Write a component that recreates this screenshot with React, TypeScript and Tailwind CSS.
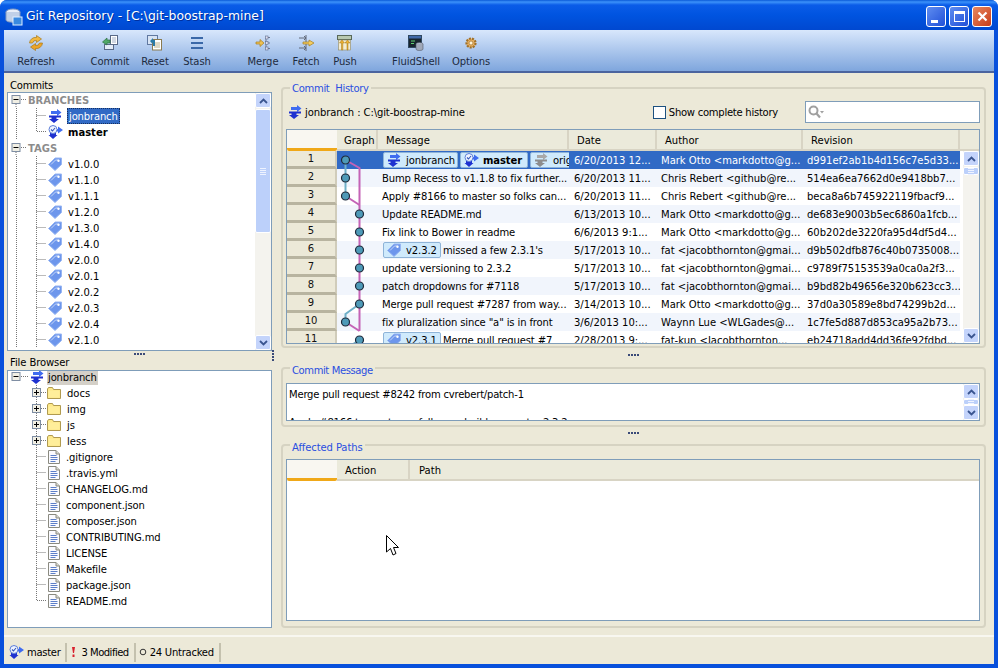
import React from "react";

const Dots = ({ vertical = false }: { vertical?: boolean }) => (
  <div className={vertical ? "flex flex-col gap-[1px]" : "flex gap-[1px]"}>
    {[0, 1, 2, 3].map((i) => (
      <span key={i} className="block h-[2px] w-[2px] bg-[#3a4a78]" />
    ))}
  </div>
);

const BranchIcon = ({ gray = false }: { gray?: boolean }) => {
  const a = gray ? "#a8a8a8" : "#3f6cf0";
  const b = gray ? "#8c8c8c" : "#1f32d0";
  return (
    <svg width="15" height="14" viewBox="0 0 15 14" className="shrink-0">
      <path d="M3 2h6V0l4.500 3.500L9 7V5H3z" fill={a} />
      <path d="M1 6.500h12v2H8.500V10H11l-5 4-5-4h2.500V8.500H1z" fill={b} />
    </svg>
  );
};

const MasterIcon = () => (
  <svg width="15" height="14" viewBox="0 0 15 14" className="shrink-0">
    <path d="M7 4h3V1.500l5 3.500-5 3.500V6.500H7z" fill="#3f6cf0" />
    <path d="M2 8h6v2h1.500L5 14 0.500 10H2z" fill="#1f32d0" />
    <circle cx="5" cy="4.500" r="4" fill="#eef3ff" stroke="#5d7fd8" />
    <path d="M3 4.500l1.500 1.500L7 3" fill="none" stroke="#3355bb" strokeWidth="1.100" />
  </svg>
);

const TagIcon = () => (
  <svg width="14" height="14" viewBox="0 0 14 14" className="shrink-0">
    <path d="M0.500 7.500L7 1h6.500v6.500L7 13.500z" fill="#6d96ec" stroke="#98b6f2" />
    <path d="M3 7.500L7.500 3h3" fill="none" stroke="#c4d6f9" />
    <circle cx="10.500" cy="3.800" r="1.200" fill="#fff" />
  </svg>
);

const FolderIcon = () => (
  <svg width="14" height="12" viewBox="0 0 14 12" className="shrink-0">
    <path d="M0.500 2V11.500H13.500V2.500H6.500L5.500 0.500H1.500z" fill="#fde98a" stroke="#b09a50" />
    <rect x="1.500" y="3.500" width="11" height="7" fill="#ffee9a" />
  </svg>
);

const FileIcon = () => (
  <svg width="12" height="14" viewBox="0 0 12 14" className="shrink-0">
    <path d="M0.500 0.500H8L11.500 4V13.500H0.500z" fill="#fbfbff" stroke="#8a8a80" />
    <path d="M8 0.500V4h3.500" fill="#d8d8d0" stroke="#8a8a80" />
    <path d="M2.500 5.500h6M2.500 7.500h7M2.500 9.500h7M2.500 11.500h5" stroke="#5d7fc8" />
  </svg>
);

const Expander = ({ open }: { open: boolean }) => (
  <g>
    <rect x="0.500" y="0.500" width="8" height="8" fill="#f1efe4" stroke="#7f8ea3" />
    <path d={open ? "M2 4.500h5" : "M2 4.500h5M4.500 2v5"} stroke="#000" />
  </g>
);

const TOOLS = [
  { label: "Refresh", w: "w-[64px]", ml: "ml-0", icon: 0 },
  { label: "Commit", w: "w-[44px]", ml: "ml-[20px]", icon: 1 },
  { label: "Reset", w: "w-[40px]", ml: "ml-[3px]", icon: 2 },
  { label: "Stash", w: "w-[40px]", ml: "ml-[2px]", icon: 3 },
  { label: "Merge", w: "w-[40px]", ml: "ml-[26px]", icon: 4 },
  { label: "Fetch", w: "w-[40px]", ml: "ml-[3px]", icon: 5 },
  { label: "Push", w: "w-[36px]", ml: "ml-[1px]", icon: 6 },
  { label: "FluidShell", w: "w-[50px]", ml: "ml-[28px]", icon: 7 },
  { label: "Options", w: "w-[46px]", ml: "ml-[7px]", icon: 8 },
];

const ToolIcon = ({ i }: { i: number }) => {
  const icons = [
    <g key="r">
      <path d="M1.500 8a6 6 0 0 1 7-5.500V0.500l5 3.500-5 3.500V5.500a3.500 3.500 0 0 0-4 2.500z" fill="#f2b840" stroke="#a87818" strokeWidth="0.700" />
      <path d="M14.500 8a6 6 0 0 1-7 5.500v2l-5-3.500 5-3.500v2a3.500 3.500 0 0 0 4-2.500z" fill="#eda428" stroke="#a87818" strokeWidth="0.700" />
    </g>,
    <g key="c">
      <rect x="8.500" y="0.500" width="7" height="9" fill="#fff" stroke="#5a6a88" />
      <path d="M10 3h4M10 5h4M10 7h4" stroke="#8090b0" strokeWidth="0.700" />
      <rect x="2.500" y="9.500" width="9" height="5" fill="#e4ecf8" stroke="#5a6a88" />
      <path d="M0.500 7L5 3v2h3v3H5v2z" fill="#50a868" stroke="#2c7040" strokeWidth="0.700" />
    </g>,
    <g key="s">
      <rect x="0.500" y="0.500" width="10" height="9" fill="#d8e4f4" stroke="#6078a0" />
      <rect x="5.500" y="4.500" width="9" height="10.500" fill="#fff" stroke="#8a7a50" />
      <path d="M7 8h6M7 10h6M7 12h6" stroke="#b0a070" strokeWidth="0.800" />
      <path d="M3 6l3-3v2h2v6H6V7.500H5.500V9z" fill="#2a7aa8" />
    </g>,
    <g key="h">
      <path d="M2 3h12M2 8h12M2 13h12" stroke="#3a68a8" strokeWidth="2" />
    </g>,
    <g key="m">
      <path d="M1 7h4V4.500L9 8 5 11.500V9H1z" fill="#f0c050" stroke="#a88020" strokeWidth="0.700" />
      <path d="M11 2.500h4M11 8h4M11 13.500h4M11 2.500v11" stroke="#707890" />
      <rect x="10.500" y="1" width="2.500" height="3" fill="#dde" stroke="#607090" strokeWidth="0.600" />
      <rect x="10.500" y="6.500" width="2.500" height="3" fill="#dde" stroke="#607090" strokeWidth="0.600" />
      <rect x="10.500" y="12" width="2.500" height="3" fill="#dde" stroke="#607090" strokeWidth="0.600" />
    </g>,
    <g key="f">
      <path d="M1 3h7M6 1l2 2-2 2M1 13h7M6 11l2 2-2 2" fill="none" stroke="#606878" />
      <path d="M8 0v16" stroke="#606878" />
      <path d="M5 7h6V5l5 3-5 3V9H5z" fill="#f4cc60" stroke="#a88020" strokeWidth="0.700" />
    </g>,
    <g key="p">
      <rect x="0.500" y="0.500" width="14" height="4" fill="#b8c8b0" stroke="#586858" />
      <rect x="1.500" y="5" width="12" height="10" fill="#f4ecd0" stroke="#908860" strokeWidth="0.600" />
      <path d="M4.500 15V8H2.500L5 5l2.500 3H5.800v7zM10 15V8H8l2.500-3L13 8h-2v7z" fill="#f0b030" stroke="#a07818" strokeWidth="0.500" />
    </g>,
    <g key="fs">
      <rect x="0.500" y="0.500" width="13" height="12" fill="#18242c" stroke="#304860" />
      <rect x="1" y="1" width="12" height="2.500" fill="#4068a8" />
      <path d="M3 6h4M3 8.500h3" stroke="#60d070" />
      <ellipse cx="11.500" cy="9" rx="3.500" ry="1.500" fill="#b0b8c8" stroke="#505868" strokeWidth="0.600" />
      <path d="M8 9v5c0 2 7 2 7 0V9" fill="#a0a8b8" stroke="#505868" strokeWidth="0.600" />
    </g>,
    <g key="o">
      <circle cx="8" cy="8" r="4.500" fill="#e8b060" stroke="#a07028" strokeWidth="2.200" strokeDasharray="2 1.100" />
      <circle cx="8" cy="8" r="2" fill="#fff4d8" stroke="#a07028" strokeWidth="0.700" />
    </g>,
  ];
  return (
    <svg width="16" height="16" viewBox="0 0 16 16" className="overflow-visible">
      {icons[i]}
    </svg>
  );
};

const Scroll = ({
  thumbTop,
  thumbH,
}: {
  thumbTop: number;
  thumbH: number;
}) => {
  const Btn = ({ up }: { up: boolean }) => (
    <div className="flex h-[15px] w-full shrink-0 items-center justify-center rounded-[2px] border border-white bg-[#c4d4fb]">
      <svg width="9" height="6" viewBox="0 0 9 6">
        <path d={up ? "M1 5l3.500-3.500L8 5" : "M1 1l3.500 3.500L8 1"} fill="none" stroke="#3a5590" strokeWidth="1.800" />
      </svg>
    </div>
  );
  return (
    <div className="flex h-full w-[16px] shrink-0 flex-col bg-[#f4f3ee]">
      <Btn up />
      <div className="min-h-0 flex-1 overflow-hidden">
        <div style={{ height: thumbTop }} />
        <div
          className="flex items-center justify-center rounded-[2px] border border-white bg-[#bcd0fa]"
          style={{ height: thumbH }}
        >
          <div className="flex flex-col gap-[1px]">
            <span className="block h-[1px] w-[6px] bg-[#eef3ff]" />
            <span className="block h-[1px] w-[6px] bg-[#eef3ff]" />
            <span className="block h-[1px] w-[6px] bg-[#eef3ff]" />
            <span className="block h-[1px] w-[6px] bg-[#eef3ff]" />
          </div>
        </div>
      </div>
      <Btn up={false} />
    </div>
  );
};

const TreeGroup = ({ label }: { label: string }) => (
  <div className="flex h-[16px] items-center">
    <svg width="20" height="16" className="shrink-0">
      <g transform="translate(3.500 3)">
        <Expander open />
      </g>
      <path d="M13 7.500h6" stroke="#777" strokeDasharray="1 1" />
      <path d="M8 12v4" stroke="#777" strokeDasharray="1 1" />
    </svg>
    <span className="font-bold text-[#8c8c8c]">{label}</span>
  </div>
);

const TreeLeaf = ({
  icon,
  text,
  cls = "",
  last = false,
}: {
  icon: React.ReactNode;
  text: string;
  cls?: string;
  last?: boolean;
}) => (
  <div className="flex h-[16px] items-center">
    <svg width="40" height="16" className="shrink-0">
      <path d={last ? "M28.500 0v7.500h10" : "M28.500 0v16M28.500 7.500h10"} fill="none" stroke="#777" strokeDasharray="1 1" />
      <path d="M8.500 0v16" stroke="#777" strokeDasharray="1 1" />
    </svg>
    <div className="flex w-[19px] shrink-0 justify-start">{icon}</div>
    <span className={"whitespace-nowrap " + cls}>{text}</span>
  </div>
);

const VERSIONS = ["v1.0.0", "v1.1.0", "v1.1.1", "v1.2.0", "v1.3.0", "v1.4.0", "v2.0.0", "v2.0.1", "v2.0.2", "v2.0.3", "v2.0.4", "v2.1.0"];
const FOLDERS = ["docs", "img", "js", "less"];
const FILES = [".gitignore", ".travis.yml", "CHANGELOG.md", "component.json", "composer.json", "CONTRIBUTING.md", "LICENSE", "Makefile", "package.json", "README.md"];

const MARK = "Mark Otto <markdotto@g...";
const CHRIS = "Chris Rebert <github@re...";
const FAT = "fat <jacobthornton@gmai...";

type Row = { msg?: string; tag?: string; date: string; author: string; rev: string; badges?: boolean };
const ROWS: Row[] = [
  { badges: true, date: "6/20/2013 12...", author: MARK, rev: "d991ef2ab1b4d156c7e5d33..." },
  { msg: "Bump Recess to v1.1.8 to fix further...", date: "6/20/2013 11...", author: CHRIS, rev: "514ea6ea7662d0e9418bb7..." },
  { msg: "Apply #8166 to master so folks can...", date: "6/20/2013 11...", author: CHRIS, rev: "beca8a6b745922119fbacf9..." },
  { msg: "Update README.md", date: "6/13/2013 10...", author: MARK, rev: "de683e9003b5ec6860a1fcb..." },
  { msg: "Fix link to Bower in readme", date: "6/6/2013 9:1...", author: MARK, rev: "60b202de3220fa95d4df5d4..." },
  { tag: "v2.3.2", msg: "missed a few 2.3.1's", date: "5/17/2013 10...", author: FAT, rev: "d9b502dfb876c40b0735008..." },
  { msg: "update versioning to 2.3.2", date: "5/17/2013 10...", author: FAT, rev: "c9789f75153539a0ca0a2f3..." },
  { msg: "patch dropdowns for #7118", date: "5/17/2013 10...", author: FAT, rev: "b9bd82b49656e320b623cc3..." },
  { msg: "Merge pull request #7287 from way...", date: "3/14/2013 10...", author: MARK, rev: "37d0a30589e8bd74299b2d..." },
  { msg: 'fix pluralization since "a" is in front', date: "3/6/2013 10:...", author: "Waynn Lue <WLGades@...", rev: "1c7fe5d887d853ca95a2b73..." },
  { tag: "v2.3.1", msg: "Merge pull request #7", date: "2/28/2013 9:...", author: "fat-kun <Jacobthornton...", rev: "eb24718add4dd36fe92fdbd..." },
];

const Badge = ({ children, w }: { children: React.ReactNode; w: string }) => (
  <div className={"flex h-[16px] shrink-0 items-center gap-[4px] overflow-hidden rounded-[2px] border border-[#8fb4d8] bg-[#cfeafc] pl-[3px] tracking-[-0.1px] text-black " + w}>
    {children}
  </div>
);

const Graph = () => (
  <svg width="41" height="198" viewBox="0 0 41 198" fill="none" className="absolute left-[50px] top-0">
    <path d="M8.500 9V45" stroke="#6fb0c8" strokeWidth="2" />
    <path d="M8.500 9L22.500 17V180" stroke="#c463b6" strokeWidth="2" />
    <path d="M8.500 45L22.500 54" stroke="#c463b6" strokeWidth="2" />
    <path d="M22.500 153L8.500 163V171" stroke="#6fb0c8" strokeWidth="2" />
    <path d="M8.500 171L22.500 180" stroke="#c463b6" strokeWidth="2" />
    <path d="M22.500 189L8.500 198" stroke="#6fb0c8" strokeWidth="2" />
    {[[8.5, 9], [8.5, 27], [8.5, 45], [22.5, 63], [22.5, 81], [22.5, 99], [22.5, 117], [22.5, 135], [22.5, 153], [8.5, 171], [22.5, 189]].map(([x, y], i) => (
      <circle key={i} cx={x} cy={y} r="4" fill="#4e9ab8" stroke="#1f2a3a" strokeWidth="1.200" />
    ))}
  </svg>
);

const Corner = () => (
  <div className="flex h-full w-[50px] shrink-0 flex-col justify-end bg-[#f9f7f1]">
    <div className="h-[3px] rounded-b-[2px] bg-[#f0a818]" />
  </div>
);

const HeaderCell = ({ w, children }: { w: string; children?: React.ReactNode }) => (
  <div className={"flex h-full shrink-0 items-center border-r-2 border-[#d8d4c4] pb-[1px] pl-[7px] " + w}>{children}</div>
);

const Fieldset = ({
  title,
  h,
  pad,
  children,
}: {
  title: React.ReactNode;
  h: string;
  pad: string;
  children: React.ReactNode;
}) => (
  <fieldset className={"flex min-w-0 flex-col rounded-[4px] border-2 border-[#d6d3c2] px-[3px] " + h}>
    <legend className={"ml-[4px] h-[14px] px-[2px] leading-[14px] text-[#2a4fe0] " + pad}>{title}</legend>
    {children}
  </fieldset>
);

export default function App() {
  return (
    <div className="flex h-[668px] w-[998px] flex-col overflow-hidden rounded-t-[7px] bg-[#0850dc] text-[10px] text-black [font-family:'DejaVu_Sans',sans-serif]">
      {/* title bar */}
      <div className="flex h-[30px] shrink-0 items-center bg-[linear-gradient(#0a5ad8_0,#3c92fa_2px,#0a5ce8_5px,#0054e0_50%,#0048d0_100%)] pl-[5px] pr-[6px] pt-[3px]">
        <svg width="18" height="18" viewBox="0 0 18 18" className="shrink-0">
          <ellipse cx="8" cy="4" rx="7" ry="3" fill="#e8eef8" stroke="#8098c0" />
          <path d="M1 4v8c0 3 14 3 14 0V4" fill="#c0d0e8" stroke="#8098c0" />
          <rect x="8" y="9" width="9" height="8" fill="#3a8ae0" stroke="#dfeeff" />
        </svg>
        <span className="ml-[3px] whitespace-nowrap text-[12.400px] text-white [text-shadow:1px_1px_0_#0030a0]">Git Repository - [C:\git-boostrap-mine]</span>
        <div className="ml-auto flex gap-[3px]">
          <div className="flex h-[21px] w-[20px] items-end rounded-[3px] border border-white bg-[linear-gradient(135deg,#5f8df0,#2050d8)] pb-[3px] pl-[4px]">
            <span className="block h-[3px] w-[7px] bg-white" />
          </div>
          <div className="flex h-[21px] w-[20px] items-center justify-center rounded-[3px] border border-white bg-[linear-gradient(135deg,#5f8df0,#2050d8)]">
            <span className="block h-[11px] w-[11px] border border-t-[3px] border-white" />
          </div>
          <div className="flex h-[21px] w-[20px] items-center justify-center rounded-[3px] border border-white bg-[linear-gradient(135deg,#e88860,#c83c18)]">
            <svg width="11" height="11" viewBox="0 0 11 11">
              <path d="M1.500 1.500l8 8M9.500 1.500l-8 8" stroke="#fff" strokeWidth="2.200" />
            </svg>
          </div>
        </div>
      </div>

      <div className="mx-[4px] mb-[4px] flex min-h-0 flex-1 flex-col bg-[#ece9d8]">
        {/* toolbar */}
        <div className="flex h-[43px] shrink-0 border-b-2 border-[#4b649e] bg-[linear-gradient(#d8e7fc,#7fa6dd)]">
          {TOOLS.map((t) => (
            <div key={t.label} className={"flex shrink-0 flex-col items-center pt-[5px] text-[#1d2b40] " + t.w + " " + t.ml}>
              <ToolIcon i={t.icon} />
              <span className="mt-[3px] whitespace-nowrap tracking-[-0.05px]">{t.label}</span>
            </div>
          ))}
        </div>

        {/* body */}
        <div className="flex min-h-0 flex-1">
          {/* left column */}
          <div className="flex w-[268px] shrink-0 flex-col pl-[3px] pt-[6px]">
            <div className="h-[13px] pl-[3px] leading-[14px] tracking-[-0.2px]">Commits</div>
            <div className="flex h-[259px] border border-[#7f9db9] bg-white">
              <div className="min-w-0 flex-1 overflow-hidden">
                <div className="-mt-[1px]">
                  <TreeGroup label="BRANCHES" />
                  <TreeLeaf
                    icon={<BranchIcon />}
                    text="jonbranch"
                    cls="flex h-[16px] items-center border border-dotted border-[#16305f] bg-[#316ac5] px-[1px] tracking-[-0.15px] text-white"
                  />
                  <TreeLeaf icon={<MasterIcon />} text="master" cls="pl-[1px] font-bold" last />
                  <TreeGroup label="TAGS" />
                  {VERSIONS.map((v) => (
                    <TreeLeaf key={v} icon={<TagIcon />} text={v} cls="pl-[1px]" />
                  ))}
                </div>
              </div>
              <Scroll thumbTop={1} thumbH={124} />
            </div>
            <div className="flex h-[5px] items-center justify-center">
              <Dots />
            </div>
            <div className="flex h-[14px] items-center pl-[3px] leading-[14px] tracking-[-0.1px]">
              <span>File Browser</span>
            </div>
            <div className="h-[258px] overflow-hidden border border-[#7f9db9] bg-white">
              <div className="-mt-[2px]">
                <div className="flex h-[16px] items-center">
                  <svg width="22" height="16" className="shrink-0">
                    <g transform="translate(3.500 3)">
                      <Expander open />
                    </g>
                    <path d="M13 7.500h8" stroke="#777" strokeDasharray="1 1" />
                  </svg>
                  <div className="w-[17px] shrink-0">
                    <BranchIcon />
                  </div>
                  <span className="bg-[#d4d0c8] px-[1px] tracking-[-0.15px]">jonbranch</span>
                </div>
                {FOLDERS.map((f) => (
                  <div key={f} className="flex h-[16px] items-center">
                    <svg width="39" height="16" className="shrink-0">
                      <path d="M28.500 0v3M28.500 12v4M33 7.500h5" stroke="#777" strokeDasharray="1 1" />
                      <g transform="translate(24 3)">
                        <Expander open={false} />
                      </g>
                    </svg>
                    <div className="w-[19px] shrink-0">
                      <FolderIcon />
                    </div>
                    <span className="pl-[1px]">{f}</span>
                  </div>
                ))}
                {FILES.map((f, i) => (
                  <div key={f} className="flex h-[16px] items-center">
                    <svg width="40" height="16" className="shrink-0">
                      <path d={i === FILES.length - 1 ? "M28.500 0v7.500h10" : "M28.500 0v16M28.500 7.500h10"} fill="none" stroke="#777" strokeDasharray="1 1" />
                    </svg>
                    <div className="w-[18px] shrink-0">
                      <FileIcon />
                    </div>
                    <span className="whitespace-nowrap tracking-[-0.1px]">{f}</span>
                  </div>
                ))}
              </div>
            </div>
          </div>

          {/* sash */}
          <div className="flex w-[9px] shrink-0 flex-col items-start pt-[277px]">
            <Dots vertical />
          </div>

          {/* right column */}
          <div className="flex min-w-0 flex-1 flex-col pr-[8px] pt-[8px]">
            <Fieldset title={<span className="whitespace-pre tracking-[-0.3px]">Commit  History</span>} h="h-[267px]" pad="pt-[1px]">
              <div className="mt-[6px] flex h-[22px] w-[694px] shrink-0 items-center">
                <div className="flex items-center pl-[2px]">
                  <BranchIcon />
                </div>
                <span className="ml-[2px] whitespace-nowrap tracking-[-0.1px]">jonbranch : C:\git-boostrap-mine</span>
                <div className="ml-auto flex items-center">
                  <span className="block h-[13px] w-[13px] border border-[#1c5180] bg-white" />
                  <span className="ml-[3px] whitespace-nowrap tracking-[-0.25px]">Show complete history</span>
                  <div className="ml-[27px] flex h-[22px] w-[175px] items-center border border-[#7f9db9] bg-white pl-[2px]">
                    <svg width="16" height="14" viewBox="0 0 16 14">
                      <circle cx="5.500" cy="5.500" r="4" fill="none" stroke="#a0a0a0" strokeWidth="2" />
                      <path d="M8.500 8.500L12 12.500" stroke="#a0a0a0" strokeWidth="2.200" />
                      <path d="M12 6h4l-2 2.500z" fill="#a0a0a0" />
                    </svg>
                  </div>
                </div>
              </div>
              <div className="mt-[6px] flex h-[215px] w-[694px] shrink-0 flex-col overflow-hidden border border-[#7f9db9] bg-white">
                <div className="flex h-[21px] shrink-0 bg-[#ebeadb] shadow-[inset_0_-2px_0_#d8d4c4]">
                  <Corner />
                  <HeaderCell w="w-[41px]">Graph</HeaderCell>
                  <HeaderCell w="w-[191px]">
                    <span className="pl-[1px]">Message</span>
                  </HeaderCell>
                  <HeaderCell w="w-[88px]">
                    <span className="pl-[1px]">Date</span>
                  </HeaderCell>
                  <HeaderCell w="w-[146px]">
                    <span className="pl-[1px]">Author</span>
                  </HeaderCell>
                  <HeaderCell w="w-[157px]">
                    <span className="pl-[1px]">Revision</span>
                  </HeaderCell>
                </div>
                <div className="flex min-h-0 flex-1">
                  <div className="relative min-w-0 flex-1 overflow-hidden">
                    {ROWS.map((r, i) => {
                      const sel = i === 0;
                      const bg = sel ? "bg-[#316ac5] text-white" : i % 2 === 1 ? "bg-[#f1f5fc]" : "bg-white";
                      return (
                        <div key={i} className="flex h-[18px] items-center">
                          <div className="flex h-full w-[50px] shrink-0 items-center justify-center border-b-[3px] border-r-2 border-b-[#b8b4a0] border-r-[#d0ccba] bg-[#ece9d8] pb-[1px] text-[#111]">
                            {i + 1}
                          </div>
                          <div className={"flex h-full w-[623px] shrink-0 items-center " + bg}>
                            <div className="w-[41px] shrink-0" />
                            <div className="flex h-full w-[191px] shrink-0 items-center gap-[2px] overflow-hidden whitespace-nowrap pl-[4px] tracking-[-0.12px]">
                              {r.badges ? (
                                <div className="ml-[1px] flex gap-[2px] text-black">
                                  <Badge w="w-[75px]">
                                    <BranchIcon />
                                    jonbranch
                                  </Badge>
                                  <Badge w="w-[68px]">
                                    <MasterIcon />
                                    <b>master</b>
                                  </Badge>
                                  <Badge w="w-[42px]">
                                    <BranchIcon gray />
                                    orig
                                  </Badge>
                                </div>
                              ) : null}
                              {r.tag ? (
                                <div className="ml-[1px]">
                                  <Badge w="w-[58px]">
                                    <TagIcon />
                                    <span className="ml-[1px]">{r.tag}</span>
                                  </Badge>
                                </div>
                              ) : null}
                              {r.msg}
                            </div>
                            <div className="w-[88px] shrink-0 overflow-hidden whitespace-nowrap pl-[5px]">{r.date}</div>
                            <div className="w-[146px] shrink-0 overflow-hidden whitespace-nowrap pl-[4px]">{r.author}</div>
                            <div className="w-[157px] shrink-0 overflow-hidden whitespace-nowrap pl-[4px]">{r.rev}</div>
                          </div>
                        </div>
                      );
                    })}
                    <Graph />
                  </div>
                  <Scroll thumbTop={1} thumbH={8} />
                </div>
              </div>
            </Fieldset>

            <div className="flex h-[13px] shrink-0 items-center justify-center">
              <Dots />
            </div>

            <Fieldset title={<span className="tracking-[-0.4px]">Commit Message</span>} h="h-[66px]" pad="pt-[3px]">
              <div className="mt-[8px] flex h-[38px] w-[694px] shrink-0 overflow-hidden border border-[#7f9db9] bg-white">
                <div className="min-w-0 flex-1 overflow-hidden pl-[2px] pt-[3px] leading-[15px] tracking-[-0.2px]">
                  <div>Merge pull request #8242 from cvrebert/patch-1</div>
                  <div className="h-[13px]" />
                  <div>Apply #8166 to master so folks can build on master 2.3.2</div>
                </div>
                <Scroll thumbTop={0} thumbH={6} />
              </div>
            </Fieldset>

            <div className="flex h-[11px] shrink-0 items-center justify-center">
              <Dots />
            </div>

            <Fieldset title={<span className="tracking-[-0.1px]">Affected Paths</span>} h="h-[190px]" pad="pt-[3px]">
              <div className="mt-[7px] flex h-[162px] w-[694px] shrink-0 flex-col border border-[#7f9db9] bg-white">
                <div className="flex h-[21px] shrink-0 bg-[#ebeadb] shadow-[inset_0_-2px_0_#d8d4c4]">
                  <Corner />
                  <HeaderCell w="w-[73px]">
                    <span className="pl-[1px]">Action</span>
                  </HeaderCell>
                  <div className="flex h-full items-center pb-[1px] pl-[9px]">Path</div>
                </div>
              </div>
            </Fieldset>
          </div>
        </div>

        {/* status bar */}
        <div className="flex h-[29px] shrink-0 items-center border-t-2 border-[#f8f7f0] pl-[5px] pt-[3px]">
          <div className="flex h-[19px] items-center border-r-2 border-[#c4c1ae] pr-[5px]">
            <MasterIcon />
            <span className="ml-[3px] tracking-[-0.3px]">master</span>
          </div>
          <div className="flex h-[19px] items-center border-r-2 border-[#c4c1ae] pr-[5px]">
            <svg width="14" height="12" viewBox="1 0 14 12">
              <path d="M6 1h3l-1 6H7zM6.500 8.500h2v2.500h-2z" fill="#d8202c" />
            </svg>
            <span className="tracking-[-0.5px]">3 Modified</span>
          </div>
          <div className="flex h-[19px] items-center border-r-2 border-[#c4c1ae] pr-[5px]">
            <svg width="14" height="12" viewBox="1 0 14 12">
              <circle cx="8" cy="6" r="2.800" fill="none" stroke="#333" />
            </svg>
            <span className="tracking-[-0.25px]">24 Untracked</span>
          </div>
        </div>
      </div>

      {/* mouse pointer */}
      <svg width="14" height="22" viewBox="0 0 14 22" className="absolute left-[386px] top-[535px]">
        <path d="M0.500 0.500V17L4.500 13.500L7 20L10 18.500L7.500 12.500H12.500z" fill="#fff" stroke="#000" />
      </svg>
    </div>
  );
}
